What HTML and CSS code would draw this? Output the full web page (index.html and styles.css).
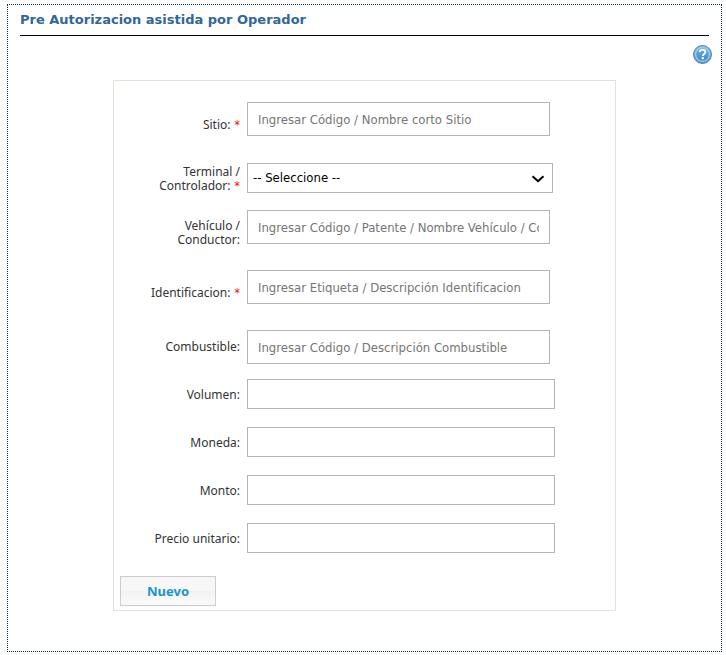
FILE: index.html
```html
<!DOCTYPE html>
<html lang="es">
<head>
<meta charset="utf-8">
<meta name="viewport" content="width=device-width, initial-scale=1">
<title>Pre Autorizacion asistida por Operador</title>
<link rel="stylesheet" href="styles.css">
</head>
<body>
<main class="page">
  <h1 class="title">Pre Autorizacion asistida por Operador</h1>
  <div class="toolbar">
    <button class="help" type="button" aria-label="Ayuda">
      <svg width="19" height="19" viewBox="0 0 19 19" aria-hidden="true">
        <defs>
          <linearGradient id="rim" x1="0" y1="0" x2="0" y2="1">
            <stop offset="0" stop-color="#8fc0df"/>
            <stop offset="1" stop-color="#4f92c2"/>
          </linearGradient>
          <linearGradient id="disc" x1="0" y1="0" x2="0" y2="1">
            <stop offset="0" stop-color="#6cabdc"/>
            <stop offset="1" stop-color="#3f8ecb"/>
          </linearGradient>
        </defs>
        <circle cx="9.500" cy="9.500" r="9" fill="url(#rim)" stroke="#5088ad"/>
        <circle cx="9.500" cy="9.500" r="6.900" fill="url(#disc)" stroke="#a3d0ec" stroke-width="1.200"/>
        <path d="M6.600 7.200C6.800 5.500 8 4.900 9.500 4.900c1.700 0 2.900.8 2.900 2.200 0 1.900-2.500 1.800-2.600 3.900" fill="none" stroke="#fff" stroke-width="1.900"/>
        <rect x="8.700" y="12.200" width="2.200" height="2" fill="#fff"/>
      </svg>
    </button>
  </div>
  <form class="panel">
    <div class="row tall">
      <label for="sitio">Sitio: <span class="req">*</span></label>
      <input class="lookup" id="sitio" type="text" placeholder="Ingresar Código / Nombre corto Sitio">
    </div>
    <div class="row">
      <label for="terminal">Terminal / Controlador: <span class="req">*</span></label>
      <div class="select">
        <select id="terminal"><option>-- Seleccione --</option></select>
        <svg class="chevron" width="14" height="8" viewBox="0 0 14 8" aria-hidden="true"><path d="M1.500 1.200 7 6.200l5.500-5" fill="none" stroke="#000" stroke-width="2"/></svg>
      </div>
    </div>
    <div class="row tall">
      <label for="vehiculo">Vehículo / Conductor:</label>
      <input class="lookup" id="vehiculo" type="text" placeholder="Ingresar Código / Patente / Nombre Vehículo / Conductor">
    </div>
    <div class="row tall">
      <label for="identificacion">Identificacion: <span class="req">*</span></label>
      <input class="lookup" id="identificacion" type="text" placeholder="Ingresar Etiqueta / Descripción Identificacion">
    </div>
    <div class="row">
      <label for="combustible">Combustible:</label>
      <input class="lookup" id="combustible" type="text" placeholder="Ingresar Código / Descripción Combustible">
    </div>
    <div class="row">
      <label for="volumen">Volumen:</label>
      <input class="plain" id="volumen" type="text">
    </div>
    <div class="row">
      <label for="moneda">Moneda:</label>
      <input class="plain" id="moneda" type="text">
    </div>
    <div class="row">
      <label for="monto">Monto:</label>
      <input class="plain" id="monto" type="text">
    </div>
    <div class="row">
      <label for="precio">Precio unitario:</label>
      <input class="plain" id="precio" type="text">
    </div>
    <button class="new" type="button">Nuevo</button>
  </form>
</main>
</body>
</html>
```
FILE: styles.css
```css
* { box-sizing: border-box; }

body {
  margin: 4px 4px 0 7px;
  background: #fff;
  color: #333;
  font: 12px/14px "Noto Sans", sans-serif;
}

.page {
  border: 1px dotted #0c2c4c;
  padding: 6px 12px 40px;
}

.title {
  margin: 0;
  padding-bottom: 6px;
  border-bottom: 1px solid #000;
  color: #336699;
  font: bold 13px/18px Verdana, "DejaVu Sans", sans-serif;
}

.toolbar {
  display: flex;
  justify-content: flex-end;
  margin-right: -3px;
  padding: 9px 0 16px;
}

.help {
  display: flex;
  padding: 0;
  border: 0;
  background: none;
  cursor: pointer;
}

.panel {
  max-width: 503px;
  margin: 0 auto;
  padding: 14px 6px 4px;
  border: 1px solid #e3e3d9;
}

.row {
  display: grid;
  grid-template-columns: 120px minmax(0, 1fr);
  column-gap: 7px;
  align-items: center;
  min-height: 48px;
}

.tall { min-height: 60px; }
.tall .lookup { margin-bottom: 12px; }

label {
  padding-left: 30px;
  text-align: right;
}

.req {
  margin-left: 1px;
  color: #f00;
  font-family: "DejaVu Sans Condensed", sans-serif;
}

input,
select {
  width: 100%;
  height: 30px;
  border: 1px solid #b5b5b5;
  border-radius: 0;
  background: #fff;
  color: #000;
  font: 13px/16px "DejaVu Sans Condensed", sans-serif;
}

.plain { max-width: 308px; margin-bottom: 2px; padding: 0 6px; }
.lookup { max-width: 303px; height: 34px; padding: 0 10px; }
.lookup::placeholder { color: #757575; }

.select {
  display: flex;
  position: relative;
  max-width: 306px;
  margin-bottom: 2px;
}

select {
  padding: 0 24px 0 5px;
  appearance: none;
}

.chevron {
  position: absolute;
  top: 12px;
  right: 8px;
  pointer-events: none;
}

.new {
  display: block;
  width: 96px;
  height: 30px;
  margin-top: 13px;
  padding: 0;
  border: 1px solid #ccc;
  background: linear-gradient(#f7f7f7 50%, #f2f2f2 50%, #fafafa);
  color: #1c94c4;
  font: bold 13px/18px "Trebuchet MS", "Noto Sans", sans-serif;
}
```
